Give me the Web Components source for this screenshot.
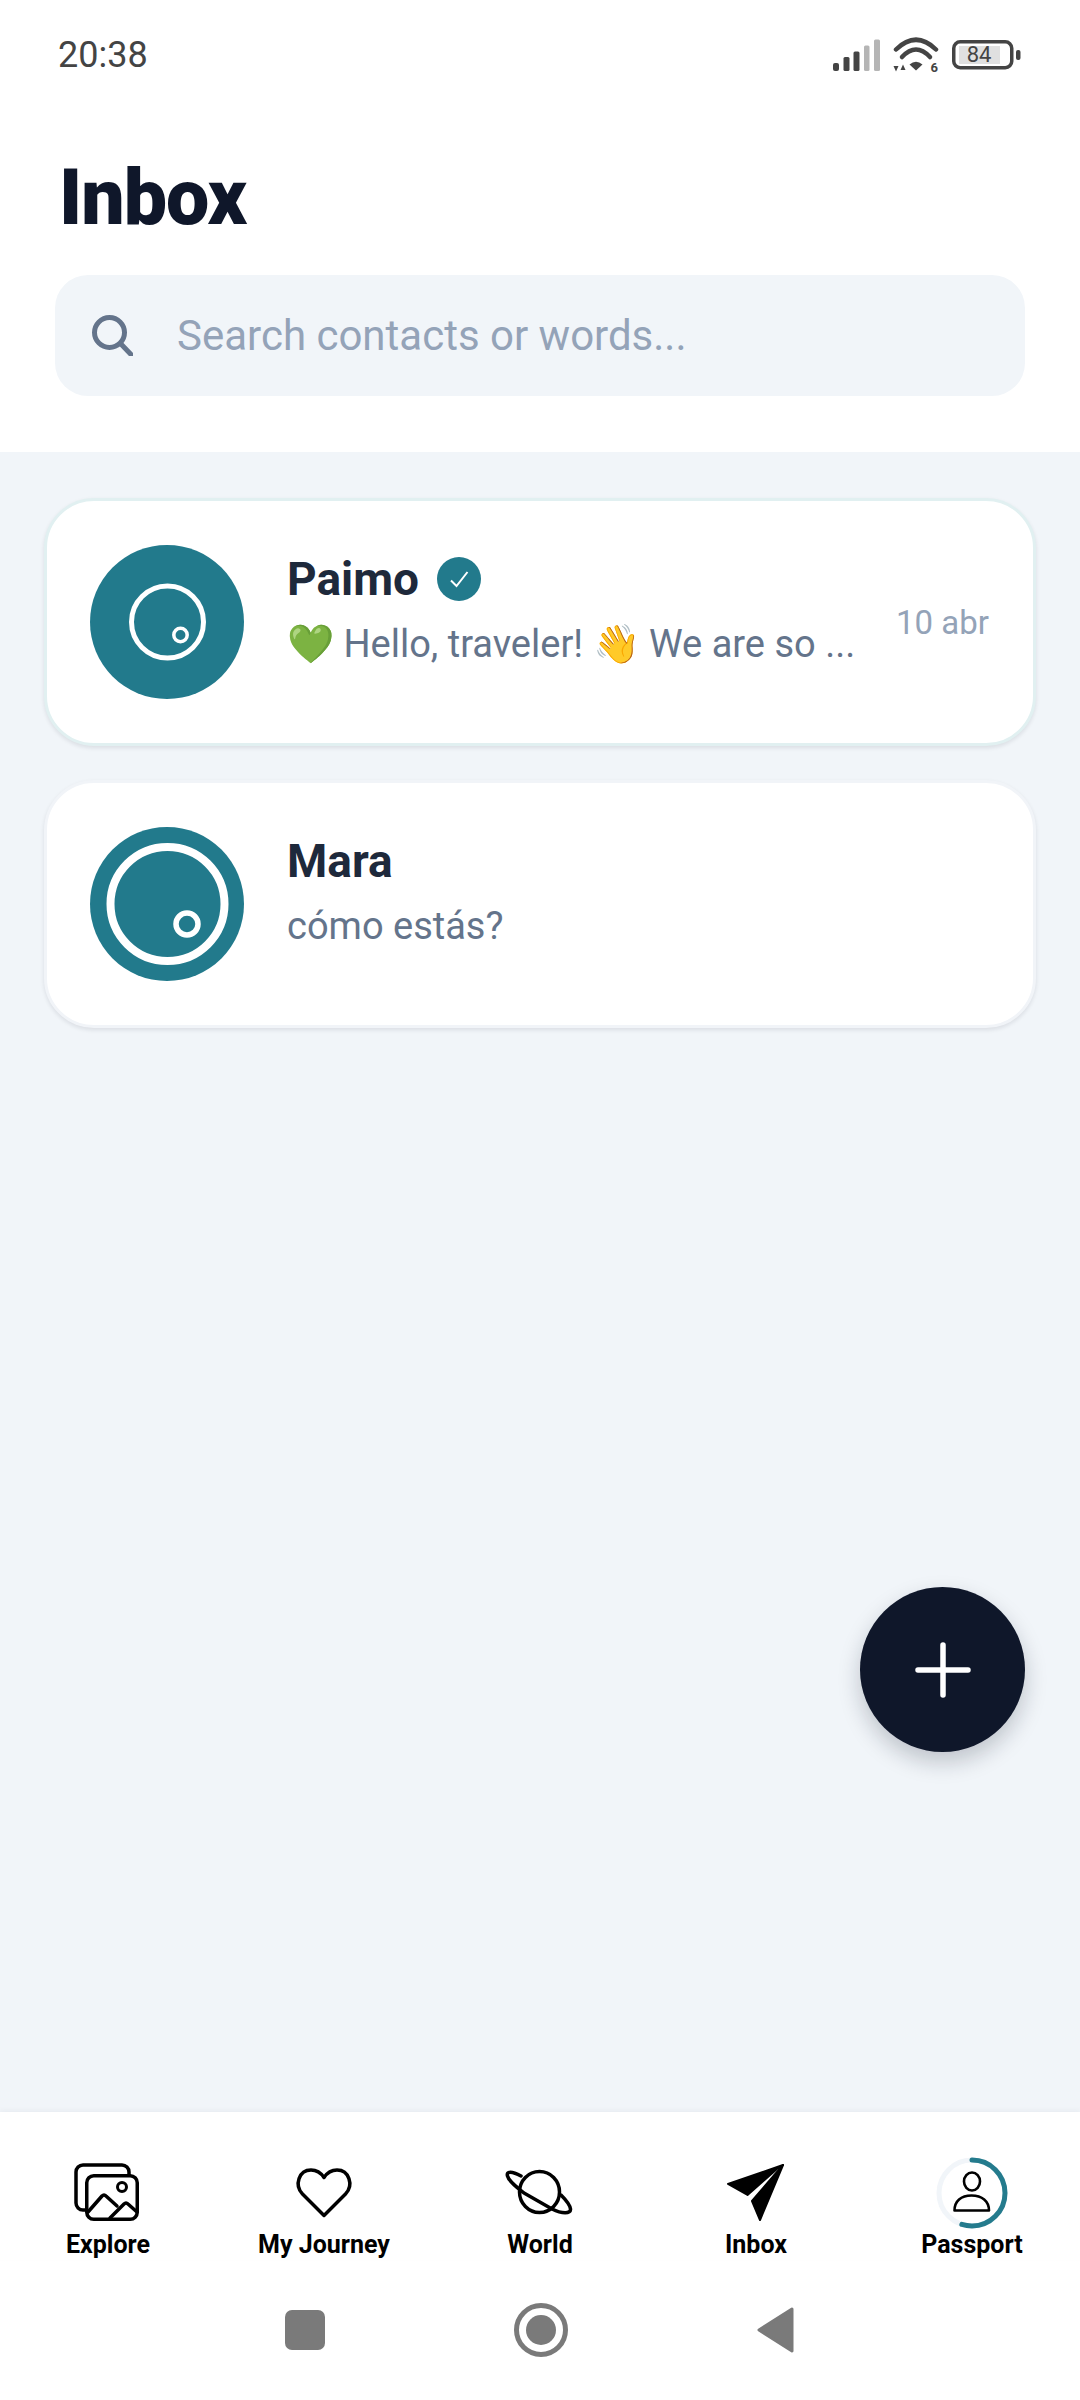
<!DOCTYPE html>
<html lang="en">
<head>
<meta charset="utf-8">
<title>Inbox</title>
<style>
  html, body { margin: 0; padding: 0; background: #fff; }
  body { font-family: Roboto, "Noto Sans", sans-serif; }
  inbox-app { height: 2400px; }
</style>
</head>
<body>
<inbox-app>
  <status-bar time="20:38" battery="84"></status-bar>
  <inbox-header title="Inbox" placeholder="Search contacts or words..."></inbox-header>
  <inbox-list>
    <chat-card name="Paimo" time="10 abr" verified ring="36" ring-width="5" dot-x="90.5" dot-y="90" dot="6.7" dot-width="3.5" accent>💚 Hello, traveler! 👋 We are so ...</chat-card>
    <chat-card name="Mara" ring="57" ring-width="8" dot-x="97" dot-y="97" dot="11" dot-width="5.5">cómo estás?</chat-card>
    <fab-button></fab-button>
  </inbox-list>
  <bottom-nav>
    <nav-tab label="Explore">
      <svg viewBox="0 0 72 72" fill="none" stroke="#000" stroke-width="3.5" stroke-linecap="round" stroke-linejoin="round">
        <path d="M13 53H11a7 7 0 0 1-7-7V15a7 7 0 0 1 7-7H50a7 7 0 0 1 7 7V18"/>
        <rect x="14.75" y="18.75" width="50.5" height="43.5" rx="7"/>
        <circle cx="50" cy="30" r="4.5" stroke-width="3"/>
        <path d="M16 55L30 39Q32 37 34 39L45 49"/>
        <path d="M38 61L52 47Q54 45 56 47L65 55"/>
      </svg>
    </nav-tab>
    <nav-tab label="My Journey">
      <svg viewBox="0 0 72 72" fill="none" stroke="#000" stroke-width="3.5" stroke-linejoin="round">
        <path d="M36 58.5L14.5 37C6 28 11 13 23 13C29 13 33 16 36 20.5C39 16 43 13 49 13C61 13 66 28 57.5 37Z"/>
      </svg>
    </nav-tab>
    <nav-tab label="World">
      <svg viewBox="0 0 72 72" fill="none" stroke="#000" stroke-width="3.5" stroke-linecap="round" stroke-linejoin="round">
        <ellipse cx="35.5" cy="35" rx="20" ry="20.5"/>
        <path d="M17 19C8 14 2 14 3.5 19C5 25 14 31 20 36L48 52C58 57 67 57 66.5 52C66 48 62 43 57 38"/>
      </svg>
    </nav-tab>
    <nav-tab label="Inbox">
      <svg viewBox="0 0 72 72" fill="#000" stroke="#000" stroke-width="2" stroke-linejoin="round">
        <path d="M63 8L8 27L27.5 38L57 12Z"/>
        <path d="M63 8L32 44L40 63Z"/>
      </svg>
    </nav-tab>
    <nav-tab label="Passport">
      <svg viewBox="0 0 72 72" fill="none" stroke="#000" stroke-width="2.6" stroke-linejoin="round">
        <circle cx="36" cy="36" r="33" stroke="#f1f5f9" stroke-width="5"/>
        <circle cx="36" cy="36" r="33" stroke="#247b8d" stroke-width="5" stroke-linecap="round" pathLength="100" stroke-dasharray="55 100" transform="rotate(-90 36 36)"/>
        <ellipse cx="36" cy="24.5" rx="8" ry="9"/>
        <path d="M18.5 53.5H53C53 44 46 38.5 35.5 38.5C25 38.5 18.5 44 18.5 53.5Z"/>
      </svg>
    </nav-tab>
  </bottom-nav>
  <system-nav></system-nav>
</inbox-app>

<script>
class InboxApp extends HTMLElement {
    constructor() {
        super();
        this.attachShadow({ mode: 'open' });
        this.shadowRoot.innerHTML = `
      <style>
        :host { display: flex; flex-direction: column; background: #fff; }
      </style>
      <slot></slot>
    `;
    }
}

class StatusBar extends HTMLElement {
    constructor() {
        super();
        this.attachShadow({ mode: 'open' });
    }

    connectedCallback() {
        this.shadowRoot.innerHTML = `
      <style>
        :host {
          display: flex;
          align-items: center;
          justify-content: space-between;
          height: 110px;
          padding: 0 58px;
          color: #444;
          font: 400 36px Roboto, sans-serif;
        }
        .icons { display: flex; align-items: center; gap: 13px; }
        svg { display: block; }
      </style>
      <span>${this.getAttribute('time')}</span>
      <div class="icons">
        <svg width="47" height="32" viewBox="0 0 47 32">
          <g fill="#444">
            <rect x="0" y="24" width="6" height="8" rx="2"/>
            <rect x="10.5" y="18" width="6" height="14" rx="1.5"/>
            <rect x="20.5" y="12.5" width="6" height="19.5" rx="1.5"/>
          </g>
          <g fill="#b5b5b5">
            <rect x="31" y="6.5" width="5.5" height="25.5" rx="1.5"/>
            <rect x="41" y="0.5" width="6" height="31.5" rx="1.5"/>
          </g>
        </svg>
        <svg width="46" height="36" viewBox="0 0 46 36">
          <g fill="none" stroke="#444" stroke-width="4.5" stroke-linecap="round">
            <path d="M3 12.5Q23 -7 43 12.5"/>
            <path d="M9 20Q23 5 37 20"/>
          </g>
          <path d="M16.5 27.5Q23 22 29.5 27.5L23 33.5Z" fill="#444"/>
          <path d="M0.5 29H5.5L3 34.5ZM7.5 33H12.5L10 27.5Z" fill="#444"/>
          <text x="37.5" y="34.5" font-family="Roboto, sans-serif" font-size="13" font-weight="700" fill="#444">6</text>
        </svg>
        <svg width="70" height="30" viewBox="0 0 70 30">
          <rect x="1.75" y="1.75" width="58" height="26" rx="6.5" fill="none" stroke="#444" stroke-width="3.5"/>
          <rect x="7" y="6" width="41" height="18" fill="#e0e0e0"/>
          <text x="27" y="22" text-anchor="middle" font-family="Roboto, sans-serif" font-size="22" fill="#444">${this.getAttribute('battery')}</text>
          <rect x="64" y="10" width="4.5" height="10" rx="2" fill="#444"/>
        </svg>
      </div>
    `;
    }
}

class InboxHeader extends HTMLElement {
    constructor() {
        super();
        this.attachShadow({ mode: 'open' });
    }

    connectedCallback() {
        this.shadowRoot.innerHTML = `
      <style>
        :host { display: block; padding: 43px 55px 56px; background: #fff; }
        h1 {
          margin: 0 0 32px 4px;
          font: 900 77px/90px Roboto, sans-serif;
          letter-spacing: -1px;
          color: #0f172a;
        }
        .search {
          display: flex;
          align-items: center;
          gap: 44px;
          height: 121px;
          padding: 0 37px;
          border-radius: 33px;
          background: #f1f5f9;
          font: 400 42px Roboto, sans-serif;
          color: #94a3b8;
        }
        svg { display: block; flex: none; }
      </style>
      <h1>${this.getAttribute('title')}</h1>
      <div class="search">
        <svg width="41" height="41" viewBox="0 0 41 41" fill="none" stroke="#64748b" stroke-width="5" stroke-linecap="round">
          <circle cx="17.5" cy="17.5" r="15"/>
          <path d="M28.5 28.5L39 39.5"/>
        </svg>
        <span>${this.getAttribute('placeholder')}</span>
      </div>
    `;
    }
}

class InboxList extends HTMLElement {
    constructor() {
        super();
        this.attachShadow({ mode: 'open' });
        this.shadowRoot.innerHTML = `
      <style>
        :host {
          position: relative;
          flex: 1;
          display: flex;
          flex-direction: column;
          gap: 34px;
          padding: 46px 44px;
          background: #f1f5f9;
        }
      </style>
      <slot></slot>
    `;
    }
}

class ChatCard extends HTMLElement {
    constructor() {
        super();
        this.attachShadow({ mode: 'open' });
    }

    connectedCallback() {
        const a = (n) => this.getAttribute(n);
        const badge = this.hasAttribute('verified') ? `
        <svg class="badge" width="44" height="44" viewBox="0 0 44 44">
          <circle cx="22" cy="22" r="22" fill="#227a8c"/>
          <path d="M14 23.5L19.5 29L30.5 15" fill="none" stroke="#fff" stroke-width="2"/>
        </svg>` : '';
        const time = a('time') ? `<span class="time">${a('time')}</span>` : '';

        this.shadowRoot.innerHTML = `
      <style>
        :host {
          display: flex;
          align-items: flex-start;
          gap: 43px;
          box-sizing: border-box;
          height: 248px;
          padding: 44px 44px 0 43px;
          border: 3px solid ${this.hasAttribute('accent') ? '#e1f0f1' : '#f1f4f8'};
          border-radius: 50px;
          background: #fff;
          box-shadow: 0 2px 4px rgba(15, 23, 42, .1);
        }
        .avatar { display: block; flex: none; }
        .body { flex: 1; min-width: 0; margin-top: 4px; }
        .name-row { display: flex; align-items: center; gap: 18px; height: 60px; }
        .name { font: 700 46px/60px Roboto, sans-serif; color: #1e293b; }
        .preview {
          font: 400 38px/70px Roboto, sans-serif;
          color: #64748b;
          white-space: nowrap;
          overflow: hidden;
        }
        .time {
          flex: none;
          margin-top: 58px;
          font: 400 33px/40px Roboto, sans-serif;
          color: #94a3b8;
        }
      </style>
      <svg class="avatar" width="154" height="154" viewBox="0 0 154 154" fill="none" stroke="#fff">
        <circle cx="77" cy="77" r="77" fill="#227a8c" stroke="none"/>
        <circle cx="77.5" cy="77" r="${a('ring')}" stroke-width="${a('ring-width')}"/>
        <circle cx="${a('dot-x')}" cy="${a('dot-y')}" r="${a('dot')}" stroke-width="${a('dot-width')}"/>
      </svg>
      <div class="body">
        <div class="name-row"><span class="name">${a('name')}</span>${badge}</div>
        <div class="preview"><slot></slot></div>
      </div>
      ${time}
    `;
    }
}

class FabButton extends HTMLElement {
    constructor() {
        super();
        this.attachShadow({ mode: 'open' });
        this.shadowRoot.innerHTML = `
      <style>
        :host {
          position: absolute;
          right: 55px;
          bottom: 360px;
          display: flex;
          align-items: center;
          justify-content: center;
          width: 165px;
          height: 165px;
          border-radius: 50%;
          background: #0f172a;
          box-shadow: 0 10px 22px rgba(15, 23, 42, .22);
        }
        svg { display: block; }
      </style>
      <svg width="56" height="56" viewBox="0 0 56 56" stroke="#fff" stroke-width="5.5" stroke-linecap="round">
        <path d="M3 28H53M28 3V53"/>
      </svg>
    `;
    }
}

class BottomNav extends HTMLElement {
    constructor() {
        super();
        this.attachShadow({ mode: 'open' });
        this.shadowRoot.innerHTML = `
      <style>
        :host {
          position: relative;
          display: grid;
          grid-template-columns: repeat(5, 1fr);
          padding-top: 45px;
          background: #fff;
          box-shadow: 0 -2px 5px rgba(15, 23, 42, .04);
        }
      </style>
      <slot></slot>
    `;
    }
}

class NavTab extends HTMLElement {
    constructor() {
        super();
        this.attachShadow({ mode: 'open' });
    }

    connectedCallback() {
        this.shadowRoot.innerHTML = `
      <style>
        :host {
          display: flex;
          flex-direction: column;
          align-items: center;
          font: 700 25px/30px Roboto, sans-serif;
          color: #000;
        }
        ::slotted(svg) { display: block; width: 72px; height: 72px; }
        span { margin-top: 1px; white-space: nowrap; }
      </style>
      <slot></slot>
      <span>${this.getAttribute('label')}</span>
    `;
    }
}

class SystemNav extends HTMLElement {
    constructor() {
        super();
        this.attachShadow({ mode: 'open' });
        this.shadowRoot.innerHTML = `
      <style>
        :host {
          display: flex;
          align-items: center;
          justify-content: center;
          gap: 189px;
          height: 140px;
        }
        svg { display: block; }
      </style>
      <svg width="40" height="40" viewBox="0 0 40 40"><rect width="40" height="40" rx="7" fill="#7a7a7a"/></svg>
      <svg width="54" height="54" viewBox="0 0 54 54">
        <circle cx="27" cy="27" r="24.5" fill="none" stroke="#7a7a7a" stroke-width="5"/>
        <circle cx="27" cy="27" r="15" fill="#7a7a7a"/>
      </svg>
      <svg width="38" height="46" viewBox="0 0 38 46"><path d="M35 2L2 23L35 44Z" fill="#7a7a7a" stroke="#7a7a7a" stroke-width="3" stroke-linejoin="round"/></svg>
    `;
    }
}

customElements.define('inbox-app', InboxApp);
customElements.define('status-bar', StatusBar);
customElements.define('inbox-header', InboxHeader);
customElements.define('inbox-list', InboxList);
customElements.define('chat-card', ChatCard);
customElements.define('fab-button', FabButton);
customElements.define('bottom-nav', BottomNav);
customElements.define('nav-tab', NavTab);
customElements.define('system-nav', SystemNav);
</script>
</body>
</html>
